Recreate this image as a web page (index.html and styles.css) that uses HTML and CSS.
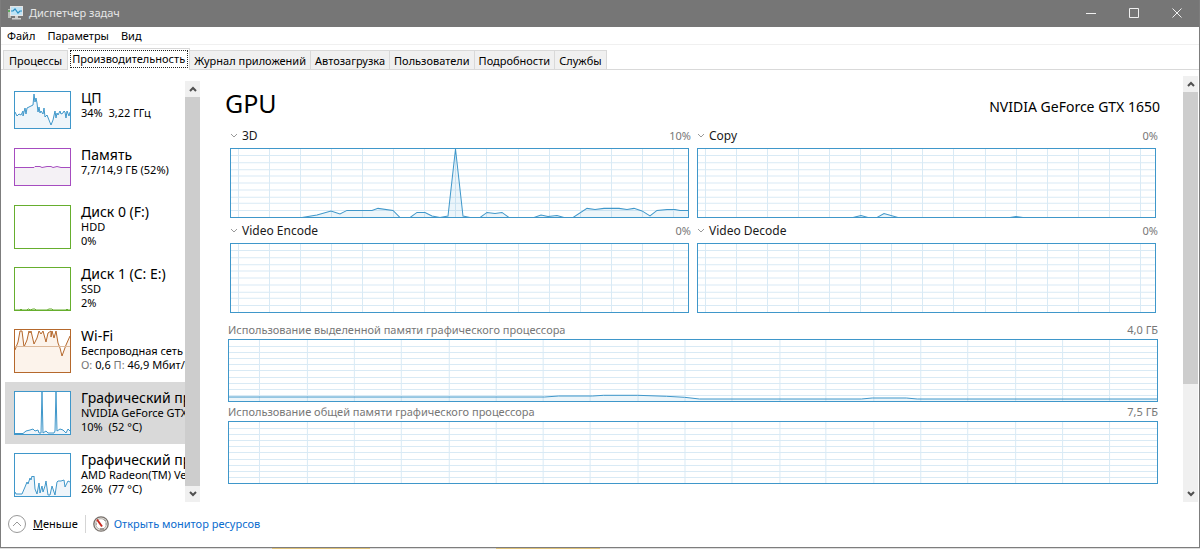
FILE: index.html
```html
<!DOCTYPE html>
<html lang="ru">
<head>
    <meta charset="UTF-8">
    <meta name="viewport" content="width=device-width, initial-scale=1.0">
    <title>Диспетчер задач</title>
    <link rel="stylesheet" href="styles.css">
</head>
<body>

<!-- shared chart grids -->
<svg class="defs" aria-hidden="true">
    <symbol id="grid-engine" viewBox="0 0 457 67" preserveAspectRatio="none">
        <path class="grid" d="M7.500 0V67M38.500 0V67M69.500 0V67M100.500 0V67M131.500 0V67M162.500 0V67M193.500 0V67M224.500 0V67M255.500 0V67M287.500 0V67M318.500 0V67M349.500 0V67M380.500 0V67M411.500 0V67M442.500 0V67M0 6.500H457M0 13.500H457M0 20.500H457M0 26.500H457M0 33.500H457M0 40.500H457M0 47.500H457M0 53.500H457M0 60.500H457"/>
    </symbol>
    <symbol id="grid-memory" viewBox="0 0 929 61" preserveAspectRatio="none">
        <path class="grid" d="M30.500 0V61M78.500 0V61M125.500 0V61M172.500 0V61M220.500 0V61M267.500 0V61M314.500 0V61M361.500 0V61M409.500 0V61M456.500 0V61M503.500 0V61M551.500 0V61M597.500 0V61M645.500 0V61M692.500 0V61M739.500 0V61M787.500 0V61M834.500 0V61M881.500 0V61M0 6.500H929M0 12.500H929M0 18.500H929M0 24.500H929M0 30.500H929M0 37.500H929M0 43.500H929M0 49.500H929M0 55.500H929"/>
    </symbol>
</svg>

<div class="window">
    <header class="titlebar">
        <svg class="app-icon" viewBox="0 0 16 14" aria-hidden="true">
            <path fill="#b9bdb9" d="M0 3h3v9H0z"/>
            <path fill="#5fae5f" d="M0 4h2v2H0z"/>
            <path fill="#e4e4e4" d="M2 0h13v10H2z"/>
            <path fill="#bfe3f5" d="M3 1h11v8H3z"/>
            <path fill="none" stroke="#2a8fc4" stroke-width="1.200" d="M3 5h2l2-2 3 4 2-2h2"/>
            <path fill="#cfcfcf" d="M7 10h3v2h3v1.500H4V12h3z"/>
        </svg>
        <h1>Диспетчер задач</h1>
        <div class="controls">
            <button aria-label="Свернуть"><svg viewBox="0 0 10 10"><path d="M0 5.500h10"/></svg></button>
            <button aria-label="Развернуть"><svg viewBox="0 0 10 10"><path d="M.5.5h9v9h-9z"/></svg></button>
            <button aria-label="Закрыть"><svg viewBox="0 0 10 10"><path d="M.5.5l9 9M9.500.5l-9 9"/></svg></button>
        </div>
    </header>

    <nav class="menu">
        <button>Файл</button>
        <button>Параметры</button>
        <button>Вид</button>
    </nav>

    <div class="tabs" role="tablist">
        <button role="tab">Процессы</button>
        <button role="tab" class="active" aria-selected="true">Производительность</button>
        <button role="tab">Журнал приложений</button>
        <button role="tab">Автозагрузка</button>
        <button role="tab">Пользователи</button>
        <button role="tab">Подробности</button>
        <button role="tab">Службы</button>
    </div>

    <div class="content">
        <aside class="sidebar">
            <div class="devices">
                <button class="device blue small">
                    <svg class="thumb" viewBox="0 0 55 36" preserveAspectRatio="none">
                        <path d="M-2 38V20H0L2 24 4 22 6 23 8 19V24L10 16 11 22 12 16 14 15 18 13 19 2 20 10 21 6 22 11 23 20 24 15 25 21 26 19 28 22 29 16 30 25 32 23 34 28 36 33 38 28 40 19 41 26 42 21 43 23 45 19 46 22 48 21 49 19 50 20 51 26 52 19 54 24 55 20H57V38z"/>
                    </svg>
                    <span class="info"><b>ЦП</b><span>34%&nbsp; 3,22 ГГц</span></span>
                </button>
                <button class="device purple small">
                    <svg class="thumb" viewBox="0 0 55 36" preserveAspectRatio="none">
                        <path d="M-2 38V18.500H19L20 17.500H25L27 18.500 32 17.500H36L38 18.500 42 17.500 46 18.500H57V38z"/>
                    </svg>
                    <span class="info"><b>Память</b><span>7,7/14,9 ГБ (52%)</span></span>
                </button>
                <button class="device green">
                    <svg class="thumb" viewBox="0 0 55 42" preserveAspectRatio="none"></svg>
                    <span class="info"><b>Диск 0 (F:)</b><span>HDD</span><span>0%</span></span>
                </button>
                <button class="device green">
                    <svg class="thumb" viewBox="0 0 55 42" preserveAspectRatio="none">
                        <path d="M-2 44V42H5L6 41 7 42H12L13 41H14L15 42 18 41H20L21 42H32L34 41H37L38 42H51L52 41 53 42H57V44z"/>
                    </svg>
                    <span class="info"><b>Диск 1 (C: E:)</b><span>SSD</span><span>2%</span></span>
                </button>
                <button class="device brown">
                    <svg class="thumb" viewBox="0 0 55 42" preserveAspectRatio="none">
                        <path d="M-2 44V20H0L3 12 5 1H7L9 17 12 10 14 1 15 3 16 1 19 14 22 8 24 1 26 4 28 1 31 12 33 3 36 1V7L37 1 39 8 41 1 43 13 45 18 47 26 51 15 55 6H57V44z"/>
                        <path class="level" d="M0 16.500H55"/>
                    </svg>
                    <span class="info"><b>Wi-Fi</b><span>Беспроводная сеть</span><span><i>О:</i> 0,6 <i>П:</i> 46,9 Мбит/с</span></span>
                </button>
                <button class="device blue selected">
                    <svg class="thumb" viewBox="0 0 55 42" preserveAspectRatio="none">
                        <path d="M-2 44V41.500H8L11 39 15 38 18 37 20 39 23 38 24 41H26L27 0 28 41 31 39 33 41H39L40 39 41 0 42 39 45 37 48 38 51 41 53 37 55 39H57V44z"/>
                    </svg>
                    <span class="info"><b>Графический процессор 0</b><span>NVIDIA GeForce GTX 1650</span><span>10%&nbsp; (52 °C)</span></span>
                </button>
                <button class="device blue">
                    <svg class="thumb" viewBox="0 0 55 42" preserveAspectRatio="none">
                        <path d="M-2 44V38H0L1 40H7L10 33 12 28 13 30 15 24 16 26 17 22 18 23 19 22 20 35 22 40 24 29 25 39 27 32 28 38 30 32 31 27 33 41H35L37 32 38 35 40 41 42 28 43 27H46L49 26 50 33 53 27 55 28H57V44z"/>
                    </svg>
                    <span class="info"><b>Графический процессор 1</b><span>AMD Radeon(TM) Vega</span><span>26%&nbsp; (77 °C)</span></span>
                </button>
            </div>
            <div class="scrollbar">
                <button aria-label="Вверх"><svg viewBox="0 0 8 6"><path d="M1 5l3-3 3 3"/></svg></button>
                <div class="track"><div class="handle"></div></div>
                <button aria-label="Вниз"><svg viewBox="0 0 8 6"><path d="M1 1l3 3 3-3"/></svg></button>
            </div>
        </aside>

        <main class="details">
            <div class="heading">
                <h2>GPU</h2>
                <p>NVIDIA GeForce GTX 1650</p>
            </div>

            <div class="engines">
                <section>
                    <div class="caption"><button><svg viewBox="0 0 8 6"><path d="M1 1l3 3 3-3"/></svg>3D</button><span>10%</span></div>
                    <svg class="chart" viewBox="0 0 457 67" preserveAspectRatio="none">
                        <use href="#grid-engine"/>
                        <path class="usage" d="M-2 69V67.500H71L86 65 100 61 109 64 116 60.500H141L147 58.500 162 60.500 169 67.500H179L186 62.500H194L201 66 209 67.500 217 66 224.500 0 232 66 239 67.500H249L256 62.500 264 63.500 271 62.500 278 67.500H303L310 65 317 66.500 326 65.500 333 67.500H342L356 58.500 364 59.500 373 58.500H388L396 59.500 403 58.500 411 61 419 66 426 60.500 436 59.500H444L449 60.500H459V69z"/>
                    </svg>
                </section>
                <section>
                    <div class="caption"><button><svg viewBox="0 0 8 6"><path d="M1 1l3 3 3-3"/></svg>Copy</button><span>0%</span></div>
                    <svg class="chart" viewBox="0 0 457 67" preserveAspectRatio="none">
                        <use href="#grid-engine"/>
                        <path class="usage" d="M-2 69V67.500H155L163 65.500 170 67.500H179L186 63.500 200 67.500H312L318 66.500 325 67.500H459V69z"/>
                    </svg>
                </section>
                <section>
                    <div class="caption"><button><svg viewBox="0 0 8 6"><path d="M1 1l3 3 3-3"/></svg>Video Encode</button><span>0%</span></div>
                    <svg class="chart" viewBox="0 0 457 67" preserveAspectRatio="none"><use href="#grid-engine"/></svg>
                </section>
                <section>
                    <div class="caption"><button><svg viewBox="0 0 8 6"><path d="M1 1l3 3 3-3"/></svg>Video Decode</button><span>0%</span></div>
                    <svg class="chart" viewBox="0 0 457 67" preserveAspectRatio="none"><use href="#grid-engine"/></svg>
                </section>
            </div>

            <div class="memory">
                <section>
                    <div class="caption"><span>Использование выделенной памяти графического процессора</span><span>4,0 ГБ</span></div>
                    <svg class="chart" viewBox="0 0 929 61" preserveAspectRatio="none">
                        <use href="#grid-memory"/>
                        <path class="usage" d="M-2 64V57H316L330 56H364L375 55.300H409L438 56.300 456 57.300 471 59H633L644 58H678L689 59H931V64z"/>
                    </svg>
                </section>
                <section>
                    <div class="caption"><span>Использование общей памяти графического процессора</span><span>7,5 ГБ</span></div>
                    <svg class="chart" viewBox="0 0 929 61" preserveAspectRatio="none"><use href="#grid-memory"/></svg>
                </section>
            </div>
        </main>

        <div class="scrollbar main-scroll">
            <button aria-label="Вверх"><svg viewBox="0 0 8 6"><path d="M1 5l3-3 3 3"/></svg></button>
            <div class="track"><div class="handle"></div></div>
            <button aria-label="Вниз"><svg viewBox="0 0 8 6"><path d="M1 1l3 3 3-3"/></svg></button>
        </div>
    </div>

    <footer class="footer">
        <button class="less">
            <svg viewBox="0 0 18 18"><circle cx="9" cy="9" r="8.500"/><path d="M5 11l4-4 4 4"/></svg>
            <span><u>М</u>еньше</span>
        </button>
        <a class="monitor" href="#">
            <svg viewBox="0 0 16 16">
                <circle cx="8" cy="8" r="7.200" fill="#e9e6e2" stroke="#77706b" stroke-width="1.300"/>
                <circle cx="8" cy="8" r="5.300" fill="#fff" stroke="#b8b2ac" stroke-width="1"/>
                <path d="M11 3.500l1.500 1.500M12.500 8h1M3 8h1" stroke="#777" fill="none"/>
                <path d="M4 3.500l5 7" stroke="#c8281e" stroke-width="2" fill="none"/>
                <path d="M7 13h4" stroke="#8a8580" stroke-width="1.500"/>
            </svg>
            Открыть монитор ресурсов
        </a>
    </footer>
</div>

</body>
</html>
```

FILE: styles.css
```css
* { box-sizing: border-box; }
body { margin: 0; height: 100vh; padding-bottom: 1px; overflow: hidden; font-family: "Noto Sans", "Open Sans", sans-serif; font-size: 11px; color: #000; background: linear-gradient(90deg, #ddd 272px, #dfc27a 272px, #dfc27a 370px, #ddd 370px, #ddd 496px, #dfc27a 496px, #dfc27a 600px, #ddd 600px); }
h1, h2, p { margin: 0; font-weight: normal; }
button { margin: 0; padding: 0; border: none; background: none; font: inherit; color: inherit; }
svg { display: block; flex: none; }
.defs { position: absolute; width: 0; height: 0; }

.window { height: 100%; display: flex; flex-direction: column; background: #fff; border: 1px solid #7d7d7d; border-top: none; }

.titlebar { display: flex; align-items: center; height: 27px; padding: 0 1px 2px 7px; background: #767676; color: #e6e6e6; flex: none; }
.titlebar h1 { flex: 1; font-size: 11px; margin-left: 5px; }
.app-icon { width: 16px; height: 14px; }
.controls { display: flex; }
.controls button { width: 43px; height: 25px; display: flex; align-items: center; justify-content: center; }
.controls svg { width: 10px; height: 10px; fill: none; stroke: #f0f0f0; }

.menu { display: flex; gap: 12px; height: 18px; padding-left: 6px; border-bottom: 1px solid #f0f0f0; flex: none; }

.tabs { display: flex; align-items: flex-end; height: 25px; padding-left: 2px; border-bottom: 1px solid #d9d9d9; flex: none; }
.tabs button { height: 19px; padding: 0 4px; background: #f0f0f0; border: 1px solid #d9d9d9; border-bottom: none; border-left: none; }
.tabs button:first-child { border-left: 1px solid #d9d9d9; padding: 0 5px; }
.tabs .active { height: 22px; padding: 0 4px 2px; margin-bottom: -1px; background: #fff; outline: 1px dotted #222; outline-offset: -3px; }

.content { flex: 1; min-height: 0; display: flex; }

.sidebar { width: 199px; padding: 11px 0 0 4px; display: flex; flex: none; }
.devices { flex: 1; min-width: 0; padding-top: 1px; overflow: hidden; }
.device { display: flex; width: 100%; height: 62px; padding: 9px 0 9px 9px; gap: 10px; text-align: left; }
.device.small { height: 57px; }
.thumb { width: 57px; height: 44px; border: 1px solid var(--line); background: #fff; }
.small .thumb { height: 38px; }
.thumb path { fill: var(--fill); stroke: var(--line); stroke-width: 1; }
.thumb .level { stroke: #dcb89a; }
.blue { --line: #3f97ca; --fill: #eff5fa; }
.purple { --line: #a64cc0; --fill: #f4f1f5; }
.green { --line: #66ae2e; --fill: #eff7e9; }
.brown { --line: #b5682c; --fill: #fcf3eb; }
.selected { background: #d9d9d9; }
.info { display: flex; flex-direction: column; margin-top: -1px; white-space: nowrap; line-height: 14px; }
.info b { font-size: 14px; line-height: 16px; font-weight: normal; }
.info i { font-style: normal; color: #777; }

.scrollbar { width: 15px; display: flex; flex-direction: column; background: #f0f0f0; flex: none; }
.scrollbar button { height: 16px; display: flex; align-items: center; justify-content: center; }
.scrollbar svg { width: 8px; height: 6px; fill: none; stroke: #505050; stroke-width: 2; }
.track { flex: 1; }
.handle { height: 100%; background: #cdcdcd; }
.main-scroll { margin: 6px 1px 0 0; }
.main-scroll .handle { height: 74%; }

.details { flex: 1; min-width: 0; padding: 17px 25px 0 25px; }
.heading { display: flex; justify-content: space-between; height: 36px; }
.heading h2 { font-size: 25px; line-height: 33px; }
.heading p { font-size: 14px; line-height: 40px; margin-right: -2px; }
.caption { display: flex; align-items: center; justify-content: space-between; color: #777; }
.caption button { display: flex; align-items: center; gap: 4px; font-size: 12px; color: #1a1a1a; }
.caption button svg { width: 8px; height: 6px; fill: none; stroke: #999; }
.engines { display: grid; grid-template-columns: 1fr 1fr; gap: 0 8px; padding: 0 2px 0 5px; }
.engines .caption { height: 25px; }
.engines .caption span { margin-right: -2px; }
.chart { width: 100%; height: 70px; border: 1px solid #3f97ca; overflow: hidden; }
.grid { fill: none; stroke: #d9eaf5; stroke-width: 1; }
.usage { fill: rgba(17, 125, 187, 0.08); stroke: #3f97ca; stroke-width: 1; }
.memory { padding: 7px 0 0 3px; }
.memory .caption { height: 19px; }
.memory .chart { height: 63px; }

.footer { display: flex; align-items: center; height: 45px; padding: 0 0 2px 7px; flex: none; }
.less { display: flex; align-items: center; gap: 7px; padding-right: 7px; border-right: 1px solid #d5d5d5; }
.less svg { width: 18px; height: 18px; fill: none; stroke: #999; }
.monitor { display: flex; align-items: center; gap: 5px; margin-left: 7px; color: #0a6cce; text-decoration: none; }
.monitor svg { width: 16px; height: 16px; }
```
